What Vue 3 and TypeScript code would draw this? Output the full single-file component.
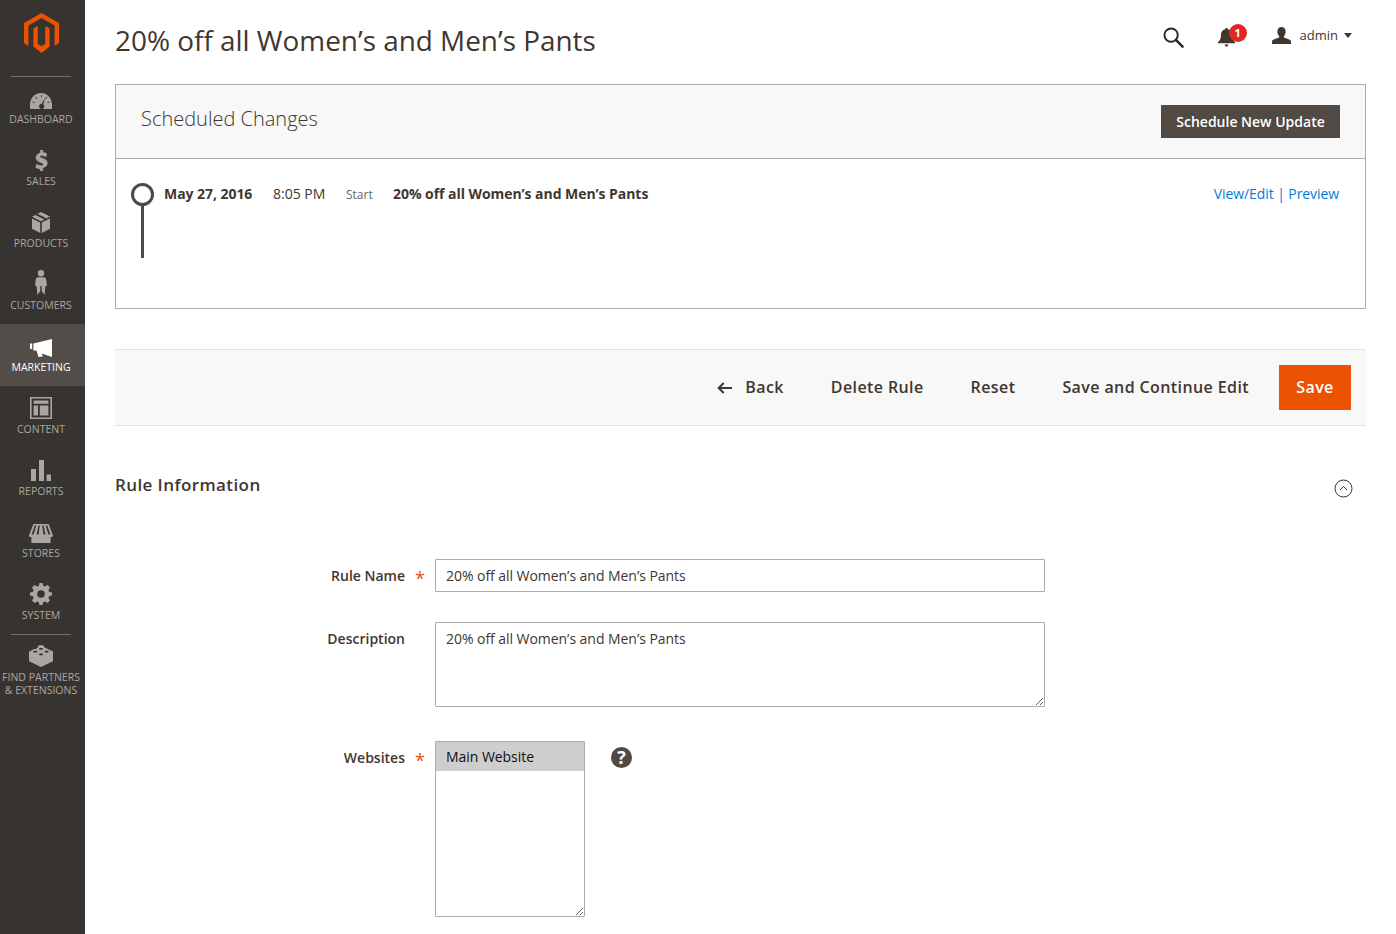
<script setup lang="ts">
interface NavItem {
  label: string
  icon: string
  w: number
  h: number
  active?: boolean
}

const logoPath =
  'M17.5 0L35 10V30.2L30.6 32.8V12.6L17.5 5.1L4.4 12.6V32.8L0 30.2V10ZM9.4 15.4L13.8 12.9V30.9L17.5 33.1L21.2 30.9V12.9L25.6 15.4V33.5L17.5 40L9.4 33.5Z'

const navItems: NavItem[] = [
  {
    label: 'Dashboard',
    w: 22,
    h: 16,
    icon: 'M11 0C4.5 0 0 5 0 12V16H22V12C22 5 17.5 0 11 0ZM11 1.8v2.6h.8V1.8ZM5.2 4l1.6 2 .6-.5-1.6-2ZM16.6 3.6l-1.5 2 .6.5 1.5-2ZM2.4 9.2l2.4.9.3-.8-2.4-.9ZM19.6 8.4l-2.4.9.3.8 2.4-.9ZM15.2 4.8l-2 6.4a2.6 2.6 0 1 1-1.6-.5Z'
  },
  {
    label: 'Sales',
    w: 13,
    h: 21,
    icon: 'M5.4 0h2.4v2.4c1.6.2 3 .7 4 1.3l-1 3c-1.2-.7-2.7-1.2-4.1-1.2-1.3 0-1.9.5-1.9 1.1 0 .8.9 1.1 2.9 1.8 3 1 4.6 2.3 4.6 4.7 0 2.3-1.6 4.1-4.5 4.6V21H5.4v-2.1c-1.9-.2-3.6-.8-4.7-1.5l1-3.1c1.3.8 2.9 1.4 4.5 1.4 1.4 0 2.2-.5 2.2-1.3s-.8-1.3-2.8-2C2.7 11.4 1 10.1 1 7.8c0-2.5 1.7-4.4 4.4-4.9Z'
  },
  {
    label: 'Products',
    w: 18,
    h: 21,
    icon: 'M9 0l9 4.6-3.4 1.8L5.5 1.8ZM3.4 2.9l9.1 4.6L9 9.3 0 4.7ZM0 6.4l8.2 4.2V21L0 16.8ZM18 6.4V16.8L9.8 21V10.6Z'
  },
  {
    label: 'Customers',
    w: 12,
    h: 25,
    icon: 'M6 0a3.2 3.2 0 1 1 0 6.4A3.2 3.2 0 0 1 6 0ZM3.2 7.2h5.6c1.4 0 2.2 1 2.400 2.400l.8 6-1.600.6L9.600 25 6.700 21V16h-1.400v5L2.400 25l-.8-8.800L0 15.600l.8-6c.2-1.400 1-2.400 2.400-2.400Z'
  },
  {
    label: 'Marketing',
    w: 22,
    h: 18,
    active: true,
    icon: 'M0 4.500H2.200V10H0ZM3.400 4.500L22 0V18L11.500 14.500L13 17.500L8.500 18L6.500 11.500H3.400Z'
  },
  {
    label: 'Content',
    w: 22,
    h: 22,
    icon: 'M0 0H22V22H0ZM1.600 1.600V20.400H20.400V1.600ZM3.600 3.600H18.400V6.800H3.600ZM3.600 8.600H8V18.400H3.600ZM9.800 8.600H18.400V18.400H9.800Z'
  },
  {
    label: 'Reports',
    w: 20,
    h: 21,
    icon: 'M0 9H5V21H0ZM8 0H13V21H8ZM15.600 14.500H20V21H15.600Z'
  },
  {
    label: 'Stores',
    w: 24,
    h: 19,
    icon: 'M4.400 0H19.600L24 11.400C24 12.400 23 13 22 13H21.600V19H2.400V13H2C1 13 0 12.400 0 11.400ZM5.800 1.600L2.600 10.600H4.600L7.400 1.600ZM9.400 1.600L7.600 10.600H9.600L10.800 1.600ZM13.200 1.600L14.400 10.600H16.400L14.600 1.600ZM16.600 1.600L19.400 10.600H21.400L18.200 1.600Z'
  },
  {
    label: 'System',
    w: 22,
    h: 22,
    icon: 'M9.400 0h3.200l.5 2.800 1.900.8L17.400 2l2.600 2.600-1.600 2.400.8 1.900 2.800.5v3.200l-2.800.5-.8 1.900 1.600 2.400-2.600 2.600-2.400-1.600-1.900.8-.5 2.800H9.400l-.5-2.800-1.900-.8L4.600 20 2 17.400 3.600 15l-.8-1.900L0 12.600V9.400l2.800-.5.8-1.900L2 4.600 4.600 2 7 3.600l1.900-.8ZM11 7.200a3.800 3.800 0 1 0 0 7.600 3.800 3.800 0 0 0 0-7.600Z'
  }
]

const partnersIcon =
  'M12 0c1.800 0 3.200.8 3.200 1.800v.5L24 6.600v9.600L12 22 0 16.200V6.600l3.400-1.700c.6-.5 1.700-.8 2.800-.8l2.600-1.300v-1C8.800.8 10.200 0 12 0ZM12 3c-1.200 0-2 .4-2 .9s.8.9 2 .9 2-.4 2-.9-.8-.9-2-.9ZM6.200 5.800c-1.200 0-2 .4-2 .9s.8.9 2 .9 2-.4 2-.9-.8-.9-2-.9ZM17.600 5.800c-1.200 0-2 .4-2 .9s.8.9 2 .9 2-.4 2-.9-.8-.9-2-.9ZM12 8.600c-1.200 0-2 .4-2 .9s.8.9 2 .9 2-.4 2-.9-.8-.9-2-.9Z'

const ruleName = '20% off all Women’s and Men’s Pants'
</script>

<template>
  <div class="page">
    <aside class="sidebar">
      <div class="logo">
        <svg width="35" height="40" viewBox="0 0 35 40"><path :d="logoPath" fill="#eb5202" /></svg>
      </div>
      <nav class="nav">
        <a
          v-for="item in navItems"
          :key="item.label"
          class="nav__item"
          :class="{ 'nav__item--active': item.active }"
        >
          <span class="nav__icon">
            <svg :width="item.w" :height="item.h" :viewBox="`0 0 ${item.w} ${item.h}`">
              <path :d="item.icon" fill-rule="evenodd" fill="currentColor" :class="`icon-${item.label.toLowerCase()}`" />
            </svg>
          </span>
          <span class="nav__label">{{ item.label }}</span>
        </a>
      </nav>
      <a class="nav__item nav__item--partners">
        <span class="nav__icon">
          <svg width="24" height="22" viewBox="0 0 24 22"><path :d="partnersIcon" fill-rule="evenodd" fill="currentColor" /></svg>
        </span>
        <span class="nav__label">Find Partners<br />&amp; Extensions</span>
      </a>
    </aside>

    <main class="main">
      <header class="topbar">
        <h1 class="topbar__title">{{ ruleName }}</h1>
        <div class="topbar__actions">
          <svg class="search-icon" width="21" height="21" viewBox="0 0 22 22" fill="none" stroke="#2b2622">
            <circle cx="8.500" cy="8.500" r="7" stroke-width="2" />
            <path d="M13.500 13.500L20.500 20.500" stroke-width="2.600" stroke-linecap="round" />
          </svg>
          <span class="bell">
            <svg width="17" height="19" viewBox="0 0 17 19"><path d="M8.500 0c.8 0 1.400.6 1.400 1.300 2.600.6 4.100 2.700 4.100 5.500 0 3.700.9 5.700 3 7.200v1.300H0V14c2.100-1.500 3-3.500 3-7.200 0-2.800 1.500-4.900 4.100-5.500C7.100.6 7.700 0 8.500 0ZM6.700 16.500h3.600c0 1.300-.8 2.100-1.800 2.100s-1.800-.8-1.800-2.100Z" fill="#41362f" /></svg>
            <span class="bell__badge">1</span>
          </span>
          <span class="user">
            <svg width="19" height="17" viewBox="0 0 20 18"><path d="M10 0c2.800 0 4.400 2 4.400 4.800 0 2-.8 3.700-1.900 4.800v1.500c2.900 1 6.300 2 7.500 3.500V18H0v-3.400c1.200-1.500 4.600-2.500 7.500-3.500V9.600C6.400 8.500 5.600 6.800 5.600 4.800 5.600 2 7.200 0 10 0Z" fill="#41362f" /></svg>
            <span class="user__name">admin</span>
            <span class="user__caret"></span>
          </span>
        </div>
      </header>

      <section class="panel">
        <div class="panel__head">
          <h2 class="panel__title">Scheduled Changes</h2>
          <button class="btn-dark" type="button">Schedule New Update</button>
        </div>
        <div class="panel__body">
          <div class="timeline">
            <span class="timeline__dot"></span>
            <span class="timeline__line"></span>
          </div>
          <div class="event">
            <strong class="event__date">May 27, 2016</strong>
            <span class="event__time">8:05 PM</span>
            <span class="event__type">Start</span>
            <strong class="event__name">{{ ruleName }}</strong>
            <span class="event__links"><a>View/Edit</a> | <a>Preview</a></span>
          </div>
        </div>
      </section>

      <div class="actions">
        <button class="action" type="button">
          <svg class="action__arrow" width="15" height="12" viewBox="0 0 15 12" fill="none" stroke="#41362f" stroke-width="2">
            <path d="M15 6H2M6.700 1L1.700 6l5 5" />
          </svg>
          Back
        </button>
        <button class="action" type="button">Delete Rule</button>
        <button class="action" type="button">Reset</button>
        <button class="action" type="button">Save and Continue Edit</button>
        <button class="action action--primary" type="button">Save</button>
      </div>

      <div class="section-head">
        <h3 class="section-head__title">Rule Information</h3>
        <svg width="19" height="19" viewBox="0 0 19 19" fill="none" stroke="#303030">
          <circle cx="9.500" cy="9.500" r="8.500" />
          <path d="M6 11l3.500-3.500L13 11" />
        </svg>
      </div>

      <form class="form" @submit.prevent>
        <div class="field">
          <label class="field__label field__label--required">Rule Name</label>
          <input class="control control--input" type="text" :value="ruleName" />
        </div>
        <div class="field field--desc">
          <label class="field__label">Description</label>
          <textarea class="control control--area" :value="ruleName"></textarea>
        </div>
        <div class="field field--sites">
          <label class="field__label field__label--required">Websites</label>
          <select class="control control--select" multiple>
            <option selected>Main Website</option>
          </select>
          <span class="help">?</span>
        </div>
      </form>
    </main>
  </div>
</template>

<style>
html,
body {
  margin: 0;
  background: #fff;
  overflow: hidden;
}
</style>

<style scoped>
.page {
  display: flex;
  height: 934px;
  font-family: 'Open Sans', 'Liberation Sans', sans-serif;
  color: #303030;
  font-size: 14px;
}

.sidebar {
  flex: 0 0 85px;
  width: 85px;
  background: #373330;
  color: #aaa6a0;
}

.logo {
  display: flex;
  justify-content: center;
  height: 76px;
  padding: 13px 3px 0 0;
  box-sizing: border-box;
}

.nav::before,
.nav::after {
  content: '';
  display: block;
  height: 1px;
  margin: 0 14px -1px 11px;
  background: #736e69;
}

.nav__item {
  display: flex;
  flex-direction: column;
  align-items: center;
  height: 62px;
  box-sizing: border-box;
  padding: 8px 3px 0 0;
  color: #aaa6a0;
  font-size: 10.5px;
  line-height: 13px;
  text-align: center;
  text-transform: uppercase;
}

.nav__item--active {
  background: #524d49;
  color: #fff;
}

.nav__icon {
  display: flex;
  align-items: flex-end;
  justify-content: center;
  height: 25px;
}

.icon-sales {
  stroke: currentColor;
  stroke-width: 0.6;
}

.nav__label {
  margin-top: 4px;
  white-space: nowrap;
}

.nav__item--partners {
  height: auto;
}

.main {
  flex: 1;
  min-width: 0;
  padding: 0 30px;
}

.topbar {
  display: flex;
  align-items: flex-start;
  justify-content: space-between;
  height: 84px;
}

.topbar__title {
  margin: 21px 0 0;
  font-size: 27.9px;
  font-weight: 400;
  line-height: 38px;
  color: #41362f;
}

.topbar__actions {
  display: flex;
  align-items: flex-start;
  padding-right: 14px;
}

.search-icon {
  margin-top: 27px;
  margin-right: 34px;
}

.bell {
  position: relative;
  display: block;
  width: 17px;
  height: 19px;
  margin-top: 28px;
  margin-right: 37px;
}

.bell__badge {
  position: absolute;
  top: -4px;
  left: 11px;
  width: 18px;
  height: 18px;
  border-radius: 50%;
  background: #e22626;
  color: #fff;
  font-size: 11px;
  font-weight: 700;
  line-height: 18px;
  text-align: center;
}

.user {
  display: flex;
  align-items: center;
  height: 17px;
  margin-top: 27px;
}

.user__name {
  margin: -2px 0 0 9px;
  font-size: 13px;
  color: #41362f;
}

.user__caret {
  width: 0;
  height: 0;
  margin-left: 6px;
  border-top: 5px solid #41362f;
  border-left: 4px solid transparent;
  border-right: 4px solid transparent;
}

.panel {
  border: 1px solid #adadad;
  height: 225px;
  box-sizing: border-box;
}

.panel__head {
  display: flex;
  align-items: center;
  justify-content: space-between;
  height: 74px;
  box-sizing: border-box;
  padding: 0 25px;
  background: #f8f8f8;
  border-bottom: 1px solid #adadad;
}

.panel__title {
  margin: 0 0 7px;
  font-size: 20px;
  font-weight: 300;
  color: #41362f;
}

.btn-dark {
  width: 179px;
  height: 33px;
  padding: 0;
  border: 0;
  background: #514943;
  color: #fff;
  font: 600 14px 'Open Sans', 'Liberation Sans', sans-serif;
}

.panel__body {
  display: flex;
  padding: 24px 26px 0 15px;
}

.timeline {
  display: flex;
  flex-direction: column;
  align-items: center;
  width: 23px;
}

.timeline__dot {
  width: 23px;
  height: 23px;
  box-sizing: border-box;
  border: 3px solid #514943;
  border-radius: 50%;
}

.timeline__line {
  width: 3px;
  height: 52px;
  background: #514943;
}

.event {
  display: flex;
  flex: 1;
  align-items: baseline;
  height: 22px;
  margin-left: 10px;
  line-height: 22px;
}

.event__date,
.event__name {
  font-weight: 700;
  color: #41362f;
  letter-spacing: -0.05px;
}

.event__date {
  width: 109px;
}

.event__time {
  width: 73px;
  color: #41362f;
}

.event__type {
  width: 47px;
  font-size: 12px;
  color: #666;
}

.event__links {
  margin-left: auto;
  color: #007bdb;
  letter-spacing: -0.08px;
}

.actions {
  display: flex;
  align-items: center;
  justify-content: flex-end;
  height: 77px;
  box-sizing: border-box;
  margin-top: 40px;
  padding-right: 15px;
  background: #f8f8f8;
  border-top: 1px solid #e3e3e3;
  border-bottom: 1px solid #e3e3e3;
}

.action {
  display: flex;
  align-items: center;
  margin-right: 47px;
  padding: 0 0 2px;
  border: 0;
  background: none;
  color: #41362f;
  font: 600 16px 'Open Sans', 'Liberation Sans', sans-serif;
  letter-spacing: 0.4px;
}

.action:nth-last-child(2) {
  margin-right: 30px;
}

.action__arrow {
  margin-top: 2px;
  margin-right: 13px;
}

.action--primary {
  justify-content: center;
  width: 72px;
  height: 45px;
  margin-right: 0;
  background: #eb5202;
  color: #fff;
}

.section-head {
  display: flex;
  align-items: center;
  justify-content: space-between;
  padding: 46px 13px 0 0;
}

.section-head__title {
  margin: 0;
  font-size: 17px;
  font-weight: 600;
  line-height: 24px;
  letter-spacing: 0.4px;
  color: #41362f;
}

.section-head svg {
  margin-top: 7px;
}

.form {
  margin-top: 61px;
}

.field {
  display: flex;
  align-items: flex-start;
}

.field__label {
  position: relative;
  width: 290px;
  padding-top: 7px;
  margin-right: 30px;
  font-weight: 600;
  line-height: 20px;
  text-align: right;
  color: #41362f;
}

.field__label--required::after {
  content: '*';
  position: absolute;
  top: 9px;
  right: -20px;
  color: #eb5202;
  font-size: 18px;
  font-weight: 400;
}

.control {
  box-sizing: border-box;
  width: 610px;
  border: 1px solid #adadad;
  padding: 0 10px;
  margin: 0;
  background: #fff;
  color: #41362f;
  font: 14px/20px 'Open Sans', 'Liberation Sans', sans-serif;
  letter-spacing: -0.05px;
  border-radius: 1px;
}

.control--input {
  height: 33px;
}

.field--desc {
  margin-top: 30px;
}

.control--area {
  height: 85px;
  padding-top: 6px;
  resize: vertical;
}

.field--sites {
  margin-top: 34px;
}

.control--select {
  width: 150px;
  height: 176px;
  padding: 0;
  color: #555;
  resize: both;
  overflow: auto;
}

.control--select option {
  height: 19px;
  min-height: 19px;
  padding: 5px 10px;
}

.help {
  width: 21px;
  height: 21px;
  margin: 6px 0 0 26px;
  border-radius: 50%;
  background: #514943;
  color: #fff;
  font-size: 18px;
  font-weight: 700;
  line-height: 21px;
  text-align: center;
}
</style>
